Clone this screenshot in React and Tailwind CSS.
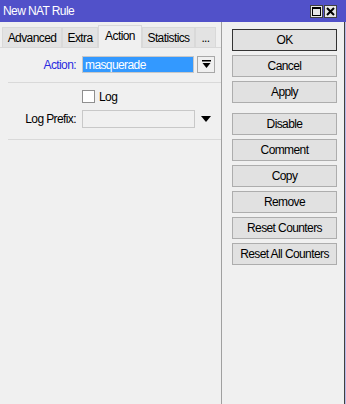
import React from 'react';

const font = { fontFamily: '"Liberation Sans", Arial, sans-serif' };

function Btn({ children, primary }) {
    return (
        <button className={`h-[22px] w-[105px] shrink-0 border bg-[#e1e1e1] text-[12px] leading-none text-black tracking-[-0.6px] ${primary ? 'border-[#333333]' : 'border-[#adadad]'}`}>
            {children}
        </button>
    );
}

function Tab({ label, active, w }) {
    return (
        <div className={`${w} flex items-center justify-center text-[12px] text-black border-t border-l border-r ${active ? 'h-[23px] bg-[#f0f0f0] border-[#d9d9d9] -mb-px relative z-10 pb-[3px]' : 'h-[20px] bg-[#e3e3e3] border-[#d9d9d9]'}`}>
            {label}
        </div>
    );
}

export default function App() {
    return (
        <div className="w-[346px] h-[404px] flex flex-col bg-[#f0f0f0] overflow-hidden tracking-[-0.6px]" style={font}>
            {/* title bar */}
            <div className="h-[22px] shrink-0 bg-[#5151c9] flex items-center justify-between pl-[3px] pr-[9px]">
                <span className="text-white text-[12px]">New NAT Rule</span>
                <div className="flex gap-[1px]">
                    <div className="w-[13px] h-[13px] bg-[#e6e6e6] border border-[#404040] flex items-center justify-center">
                        <div className="w-[9px] h-[9px] border border-black border-t-2" />
                    </div>
                    <div className="w-[13px] h-[13px] bg-[#e6e6e6] border border-[#404040] flex items-center justify-center">
                        <svg width="9" height="9" viewBox="0 0 9 9"><path d="M1 1 L8 8 M8 1 L1 8" stroke="#000" strokeWidth="2" /></svg>
                    </div>
                </div>
            </div>

            <div className="flex-1 flex">
                {/* left panel */}
                <div className="w-[222px] shrink-0 flex flex-col border-r border-[#a0a0a0]">
                    <div className="h-[25px] flex items-end pl-[2px]">
                        <Tab label="Advanced" w="w-[60px]" />
                        <Tab label="Extra" w="w-[36px]" />
                        <Tab label="Action" w="w-[44px]" active />
                        <Tab label="Statistics" w="w-[53px]" />
                        <Tab label="..." w="w-[21px]" />
                    </div>
                    <div className="flex-1 border-t border-[#d9d9d9] flex flex-col">
                        <div className="flex items-center mt-[8px] h-[17px]">
                            <span className="w-[76px] text-right text-[12px] text-[#2a2ae0]">Action:</span>
                            <div className="ml-[6px] w-[112px] h-[17px] bg-[#3399ff] border border-[#c8c8c8] text-white text-[12px] leading-none flex items-center pl-[2px]">masquerade</div>
                            <div className="ml-[3px] w-[18px] h-[17px] border border-[#a8a8a8] flex items-center justify-center">
                                <svg width="9" height="9" viewBox="0 0 9 9"><rect x="0" y="0" width="9" height="1.5" fill="#000" /><path d="M0.5 3 H8.5 L4.5 8 Z" fill="#000" /></svg>
                            </div>
                        </div>
                        <div className="ml-[8px] mt-[9px] border-t border-[#d9d9d9]" />
                        <div className="flex items-center mt-[7px] ml-[82px] h-[13px]">
                            <div className="w-[13px] h-[13px] bg-white border border-[#8f8f8f]" />
                            <span className="ml-[4px] text-[12px] text-black">Log</span>
                        </div>
                        <div className="flex items-center mt-[7px] h-[18px]">
                            <span className="w-[76px] text-right text-[12px] text-black">Log Prefix:</span>
                            <div className="ml-[6px] w-[113px] h-[18px] border border-[#c8c8c8] bg-[#f0f0f0]" />
                            <svg className="ml-[6px]" width="10" height="6" viewBox="0 0 10 6"><path d="M0 0 H10 L5 6 Z" fill="#000" /></svg>
                        </div>
                        <div className="ml-[8px] mt-[11px] border-t border-[#d9d9d9]" />
                    </div>
                </div>

                {/* right panel */}
                <div className="flex-1 flex flex-col pt-[7px] pl-[10px] border-r border-[#404040]">
                    <div className="flex flex-col gap-[4px]">
                        <Btn primary>OK</Btn>
                        <Btn>Cancel</Btn>
                        <Btn>Apply</Btn>
                    </div>
                    <div className="flex flex-col gap-[4px] mt-[10px]">
                        <Btn>Disable</Btn>
                        <Btn>Comment</Btn>
                        <Btn>Copy</Btn>
                        <Btn>Remove</Btn>
                        <Btn>Reset Counters</Btn>
                        <Btn>Reset All Counters</Btn>
                    </div>
                </div>
                <div className="w-[1px] bg-[#b9b9e8]" />
            </div>
        </div>
    );
}
